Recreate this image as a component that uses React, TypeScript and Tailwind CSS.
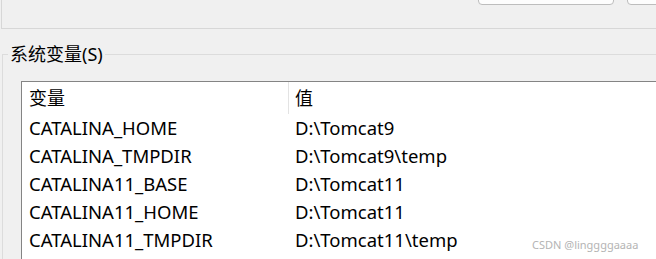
import React from 'react';

const rows: [string, string][] = [
    ['CATALINA_HOME', 'D:\\Tomcat9'],
    ['CATALINA_TMPDIR', 'D:\\Tomcat9\\temp'],
    ['CATALINA11_BASE', 'D:\\Tomcat11'],
    ['CATALINA11_HOME', 'D:\\Tomcat11'],
    ['CATALINA11_TMPDIR', 'D:\\Tomcat11\\temp'],
];

const App: React.FC = () => {
    return (
        <div
            className="relative w-[656px] h-[259px] overflow-hidden bg-[#f0f0f0] text-black"
            style={{ fontFamily: '"Noto Sans", "Noto Sans CJK SC", sans-serif' }}
        >
            {/* upper group box, mostly scrolled out of view */}
            <div className="ml-px w-[700px] h-[29px] border-l border-b border-[#d7d7d7]">
                <div className="flex gap-[13px] pl-[476px]">
                    <div className="-mt-[21px] w-[136px] h-[26px] shrink-0 rounded-[4px] border border-[#bdbdbd] bg-[#fdfdfd]" />
                    <div className="-mt-[21px] w-[136px] h-[26px] shrink-0 rounded-[4px] border border-[#bdbdbd] bg-[#fdfdfd]" />
                </div>
            </div>

            <fieldset className="mt-[12px] ml-[2px] w-[700px] h-[260px] border-t border-l border-[#dcdcdc]">
                <legend className="ml-[5px] px-[2px] text-[18px] leading-[26px]">系统变量(S)</legend>

                <div className="mt-[14px] ml-[18px] w-[700px] h-[200px] border-t border-l border-[#848484] bg-white">
                    <div className="flex h-[32px] items-center text-[18px]">
                        <div className="w-[267px] h-full flex items-center pl-[7px] border-r border-[#e3e3e3]">变量</div>
                        <div className="pl-[6px]">值</div>
                    </div>
                    {rows.map(([name, value]) => (
                        <div key={name} className="flex h-[28px] items-center text-[18.5px] leading-[28px]">
                            <div className="w-[267px] pl-[7px]">{name}</div>
                            <div className="pl-[6px]">{value}</div>
                        </div>
                    ))}
                </div>
            </fieldset>

            <div className="absolute left-[532px] top-[238px] text-[11px] leading-[14px] text-[#b4b4b4]">
                CSDN @linggggaaaa
            </div>
        </div>
    );
};

export default App;
